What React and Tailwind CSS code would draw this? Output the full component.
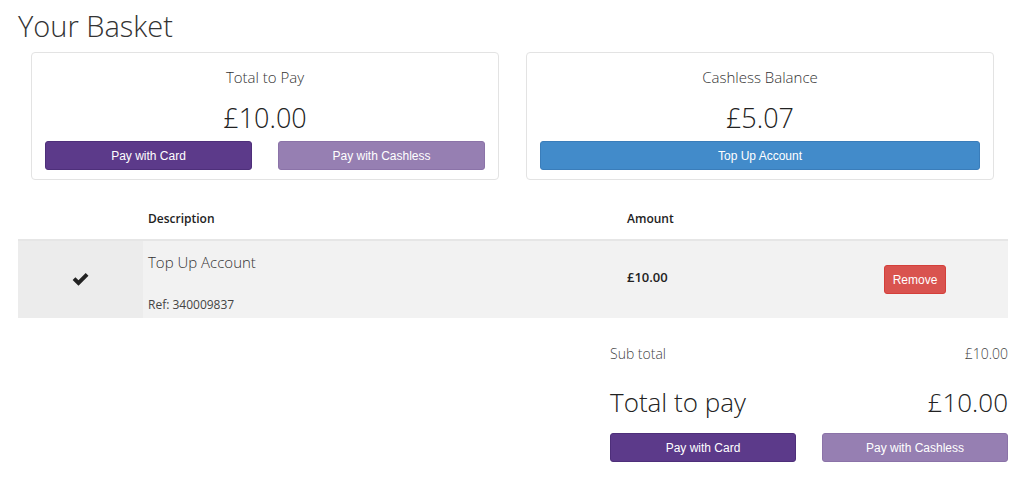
import React from 'react';

const light = { fontFamily: '"Open Sans", "Noto Sans", sans-serif' };
const arial = { fontFamily: '"Liberation Sans", Arial, sans-serif' };

function Btn({ children, tone = 'card', className = '' }) {
  const tones = {
    card: 'bg-[#5c3a8a] border-[#4e2f7a]',
    cashless: 'bg-[#967fb2] border-[#8b73a8]',
    topup: 'bg-[#428bca] border-[#3a7dba]',
  };
  return (
    <button
      style={arial}
      className={`h-[29px] rounded-[3px] border text-[12px] text-white ${tones[tone]} ${className}`}
    >
      {children}
    </button>
  );
}

function SummaryCard({ title, amount, children }) {
  return (
    <div className="rounded-[4px] border border-[#e3e3e3] bg-white px-[13px] pb-[9px] pt-[14px] text-center">
      <p style={light} className="text-[15px] font-light leading-5 text-[#333]">{title}</p>
      <p style={light} className="mt-[15px] text-[27px] font-light leading-8 text-[#222]">{amount}</p>
      <div className="mt-[7px]">{children}</div>
    </div>
  );
}

export default function App() {
  return (
    <div className="min-h-screen bg-white px-[18px] text-[#333]" style={light}>
      <h1 className="pt-[6px] text-[29px] font-light leading-[40px] text-[#333]">Your Basket</h1>

      <div className="ml-[13px] grid w-[963px] grid-cols-2 gap-[27px] pt-[6px]">
        <SummaryCard title="Total to Pay" amount="£10.00">
          <div className="grid grid-cols-2 gap-[26px]">
            <Btn tone="card">Pay with Card</Btn>
            <Btn tone="cashless">Pay with Cashless</Btn>
          </div>
        </SummaryCard>
        <SummaryCard title="Cashless Balance" amount="£5.07">
          <Btn tone="topup" className="w-full">Top Up Account</Btn>
        </SummaryCard>
      </div>

      <table className="mt-[22px] w-[990px] border-collapse text-left">
        <thead>
          <tr className="h-[38px] text-[12px] text-[#222]">
            <th className="w-[125px]"></th>
            <th className="w-[479px] pb-[3px] pl-[5px] font-semibold">Description</th>
            <th className="w-[200px] pb-[3px] pl-[5px] font-semibold">Amount</th>
            <th></th>
          </tr>
        </thead>
        <tbody>
          <tr className="h-[78px] border-t-2 border-[#e6e6e6] bg-[#f2f2f2]">
            <td className="bg-[#ececec] text-center align-middle">
              <svg viewBox="0 0 16 16" className="mx-auto h-[17px] w-[17px]" fill="#222">
                <path d="M0.6 8.4l2.6-2.6 2.9 2.9L12.9 1.9l2.6 2.6-9.4 9.4z" />
              </svg>
            </td>
            <td className="pl-[5px] align-top">
              <p className="pt-[11px] text-[15px] font-light leading-5 text-[#333]">Top Up Account</p>
              <p className="mt-[25px] text-[12px] leading-4 text-[#444]">Ref: 340009837</p>
            </td>
            <td className="pb-[3px] pl-[5px] text-[13px] font-semibold text-[#222]">£10.00</td>
            <td className="text-center">
              <button
                style={arial}
                className="h-[29px] rounded-[3px] border border-[#d43f3a] bg-[#d9534f] px-[8px] text-[12px] text-white"
              >
                Remove
              </button>
            </td>
          </tr>
        </tbody>
      </table>

      <div className="ml-[592px] mt-[26px] w-[398px]">
        <div className="flex items-center justify-between text-[14px] font-light leading-5 text-[#444]">
          <span>Sub total</span>
          <span>£10.00</span>
        </div>
        <div className="mt-[22px] flex items-center justify-between text-[26px] font-light leading-8 text-[#222]">
          <span>Total to pay</span>
          <span>£10.00</span>
        </div>
        <div className="mt-[15px] grid grid-cols-2 gap-[26px]">
          <Btn tone="card">Pay with Card</Btn>
          <Btn tone="cashless">Pay with Cashless</Btn>
        </div>
      </div>
    </div>
  );
}
